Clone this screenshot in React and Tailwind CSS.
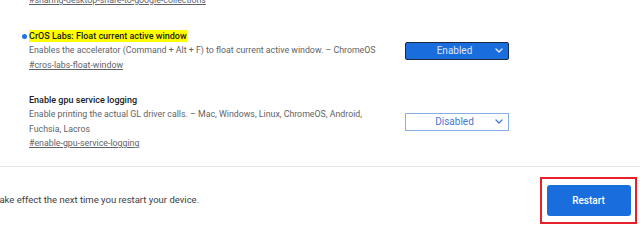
import React from 'react';

const Chevron = ({ color }) => (
    <svg width="8" height="5" viewBox="0 0 8 5" fill="none">
        <path d="M1 1l3 3 3-3" stroke={color} strokeWidth="1.3" strokeLinecap="round" strokeLinejoin="round" />
    </svg>
);

const FlagRow = ({ title, highlighted, lines, link, enabled }) => (
    <div className="flex items-center">
        <div className="w-[391px] pl-[29px] relative">
            {highlighted && (
                <span className="absolute left-[22px] top-[5px] w-[5px] h-[5px] rounded-full bg-[#1a73e8]" />
            )}
            <div className="text-[9px] leading-[14px] font-medium text-[#202124]">
                <span className={highlighted ? 'bg-[#ffff00] py-[1px]' : ''}>{title}</span>
            </div>
            {lines.map((line) => (
                <div key={line} className="text-[8.8px] leading-[14.5px] text-[#5f6368] whitespace-nowrap">
                    {line}
                </div>
            ))}
            <div className="text-[8.8px] leading-[14.5px] text-[#5f6368] underline">{link}</div>
        </div>
        <div className="ml-[14px]">
            {enabled ? (
                <div className="w-[104px] h-[18px] rounded-[2px] bg-[#1a6ddc] border border-[#1c2840] flex items-center pl-[8px] pr-[5px]">
                    <span className="flex-1 text-center text-[10px] text-[#dce7fb]">Enabled</span>
                    <Chevron color="#e8eefb" />
                </div>
            ) : (
                <div className="w-[104px] h-[18px] bg-white border border-[#89aee6] flex items-center pl-[8px] pr-[5px]">
                    <span className="flex-1 text-center text-[10px] text-[#4578d4]">Disabled</span>
                    <Chevron color="#4578d4" />
                </div>
            )}
        </div>
    </div>
);

const App = () => {
    return (
        <div className="w-[640px] h-[226px] overflow-hidden bg-white font-['Roboto',sans-serif]">
            <div className="h-[167px] border-b border-[#e4e4e4] overflow-hidden">
                <div className="pl-[29px] -mt-[7px] text-[8.8px] leading-[14px] text-[#5f6368] underline">
                    #sharing-desktop-share-to-google-collections
                </div>
                <div className="mt-[22px] flex flex-col gap-[21px]">
                    <FlagRow
                        highlighted
                        enabled
                        title="CrOS Labs: Float current active window"
                        lines={['Enables the accelerator (Command + Alt + F) to float current active window. – ChromeOS']}
                        link="#cros-labs-float-window"
                    />
                    <FlagRow
                        title="Enable gpu service logging"
                        lines={[
                            'Enable printing the actual GL driver calls. – Mac, Windows, Linux, ChromeOS, Android,',
                            'Fuchsia, Lacros',
                        ]}
                        link="#enable-gpu-service-logging"
                    />
                </div>
            </div>
            <div className="h-[59px] pt-[8px] flex items-center justify-between overflow-hidden">
                <div className="-ml-[80px] text-[9.5px] text-[#3c4043] whitespace-nowrap">
                    Your changes will take effect the next time you restart your device.
                </div>
                <div className="mr-[3px] w-[97px] h-[47px] border-2 border-[#e8202a] flex items-center justify-center">
                    <button className="w-[84px] h-[31px] rounded-[3px] bg-[#1a6ddc] text-white text-[10px] font-medium">
                        Restart
                    </button>
                </div>
            </div>
        </div>
    );
};

export default App;
